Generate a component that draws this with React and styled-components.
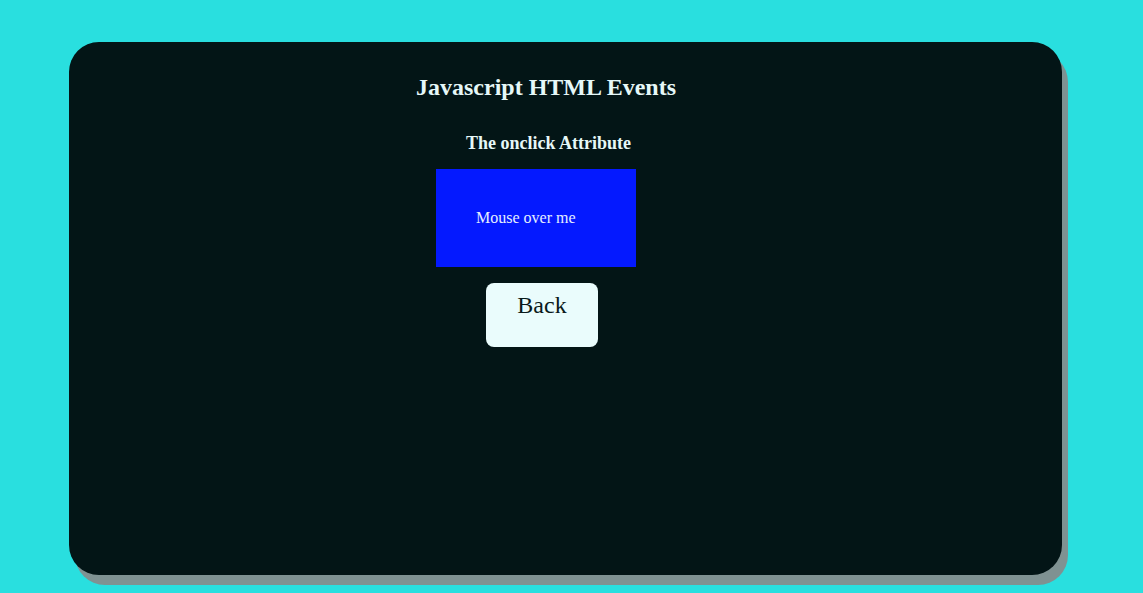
import styled, { createGlobalStyle } from "styled-components";

const GlobalStyle = createGlobalStyle`
  html, body {
    margin: 0;
    padding: 0;
    background: #29dfdf;
  }
  body {
    font-family: "Liberation Serif", "Times New Roman", serif;
  }
`;

const Page = styled.div`
  min-height: 593px;
  padding: 42px 0 0 69px;
  box-sizing: border-box;
`;

const Card = styled.div`
  width: 993px;
  height: 533px;
  box-sizing: border-box;
  padding: 32px 39px 0 0;
  background: #031516;
  border-radius: 30px;
  box-shadow: 6px 10px 0 #7f9292;
  display: flex;
  flex-direction: column;
  align-items: center;
`;

const Title = styled.h2`
  margin: 0;
  font-size: 24px;
  font-weight: bold;
  color: #e6f8f8;
  line-height: 1.15;
`;

const Subtitle = styled.h3`
  margin: 31px 0 0;
  padding-left: 5px;
  font-size: 18px;
  font-weight: bold;
  color: #e6f8f8;
  line-height: 1.15;
`;

const HoverBox = styled.div`
  margin: 16px 20px 0 0;
  width: 120px;
  padding: 40px;
  background: #0419ff;
  color: #e6f0ff;
  font-size: 16px;
  line-height: 18px;
`;

const BackButton = styled.button`
  margin: 16px 8px 0 0;
  width: 112px;
  height: 64px;
  padding: 9px 0 0;
  border: none;
  border-radius: 8px;
  background: #eafcfc;
  color: #0a1a1a;
  font-family: "Liberation Serif", "Times New Roman", serif;
  font-size: 24px;
  display: flex;
  justify-content: center;
  align-items: flex-start;
  cursor: pointer;
`;

export default function App() {
  return (
    <>
      <GlobalStyle />
      <Page>
        <Card>
          <Title>Javascript HTML Events</Title>
          <Subtitle>The onclick Attribute</Subtitle>
          <HoverBox>Mouse over me</HoverBox>
          <BackButton>Back</BackButton>
        </Card>
      </Page>
    </>
  );
}
